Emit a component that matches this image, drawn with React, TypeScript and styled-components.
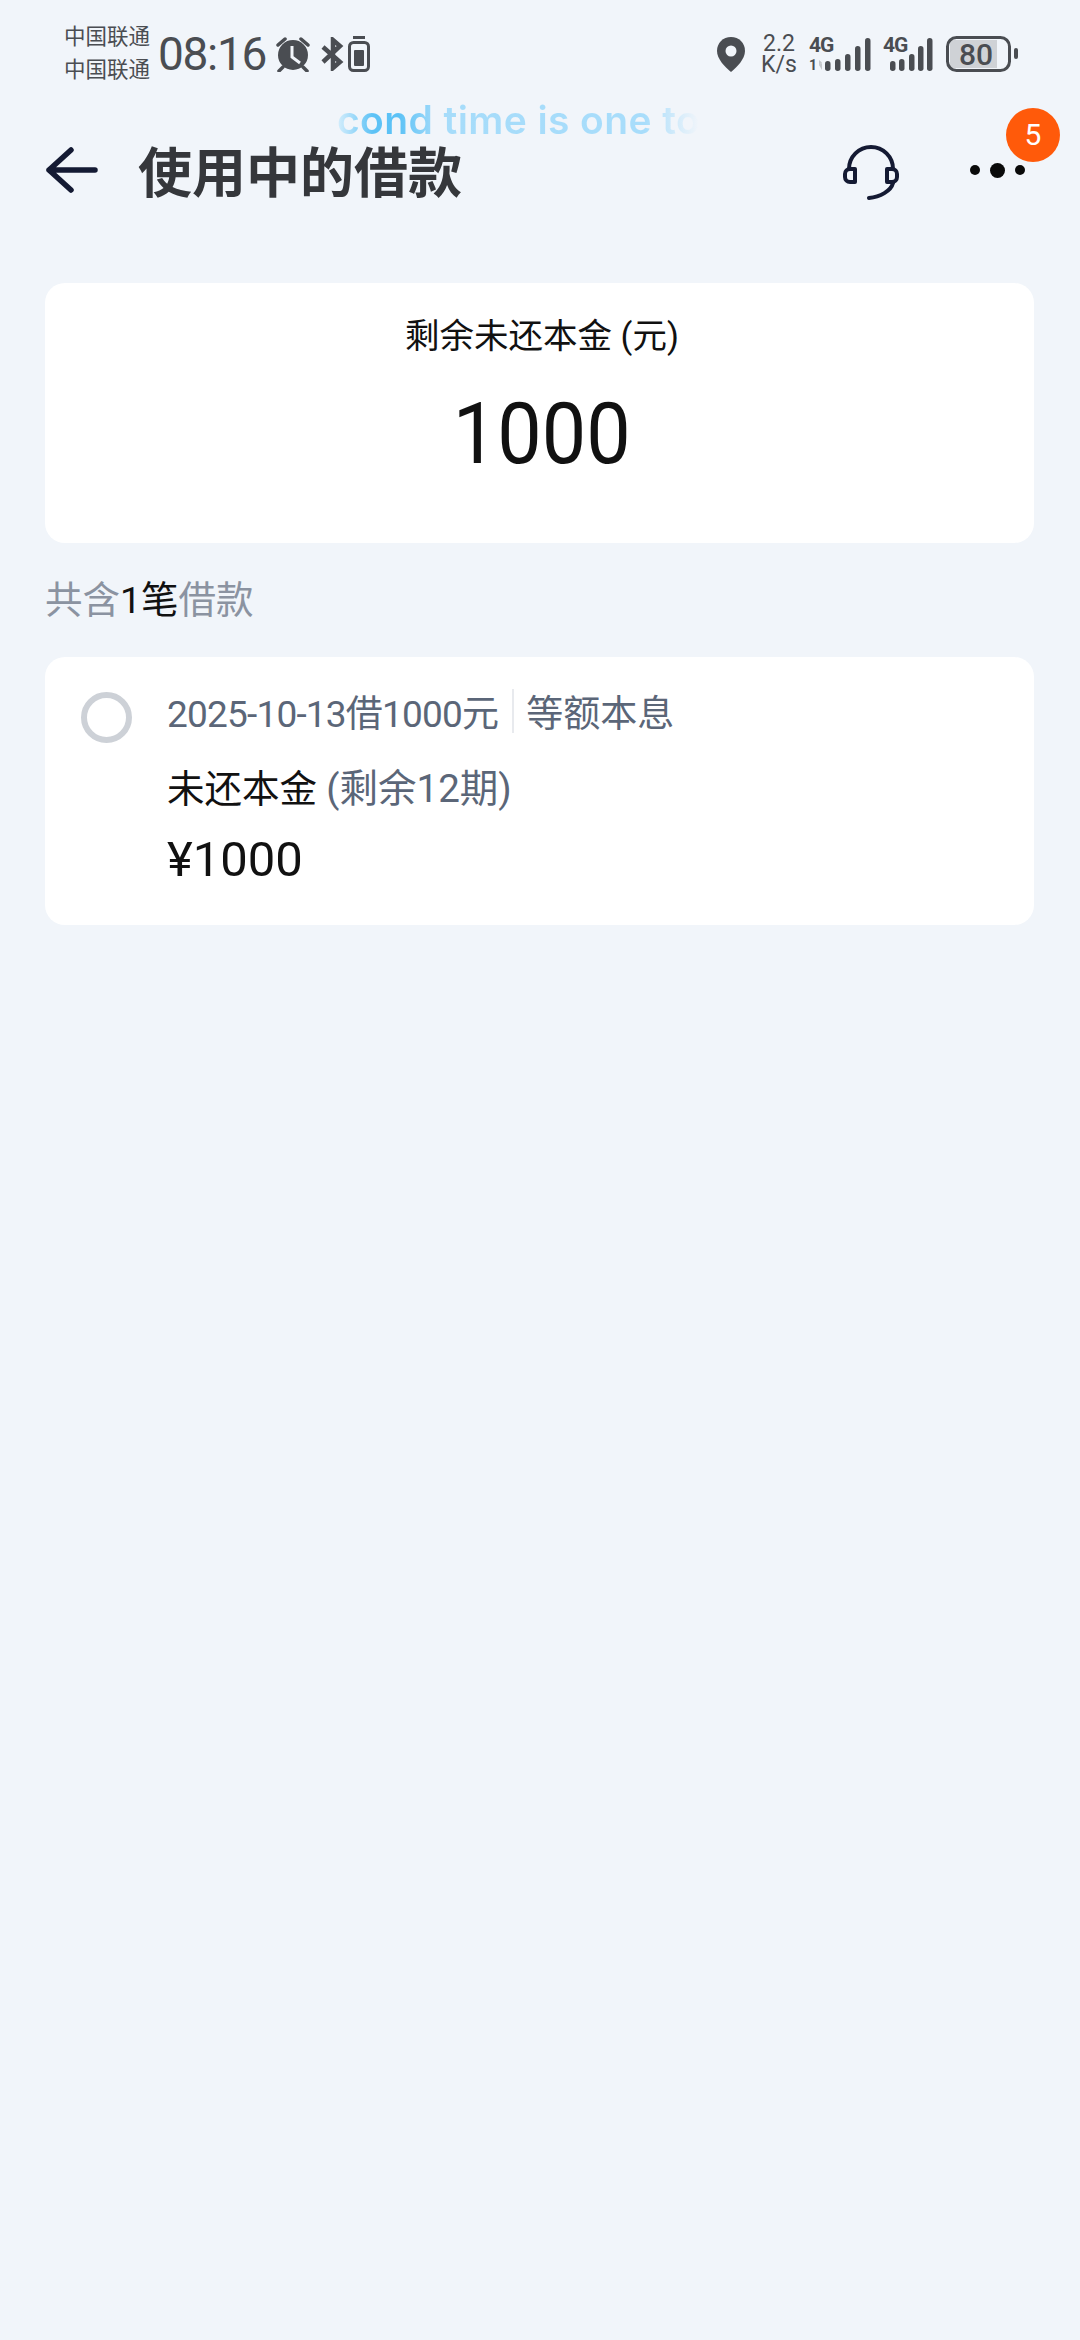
import styled, { createGlobalStyle } from "styled-components";

const GlobalStyle = createGlobalStyle`
    html, body {
        margin: 0;
        padding: 0;
        background: #f1f5fa;
    }
    * {
        box-sizing: border-box;
    }
`
const Page = styled.div`
    width: 1080px;
    height: 2340px;
    overflow: hidden;
    background: #f1f5fa;
    font-family: "Roboto", "Noto Sans CJK SC", sans-serif;
`
const StatusBar = styled.div`
    height: 100px;
    padding: 30px 62px 22px 64px;
    display: flex;
    align-items: center;
    justify-content: space-between;
    color: #4a4d52;
`
const StatusGroup = styled.div`
    display: flex;
    align-items: center;
`
const Carriers = styled.div`
    display: flex;
    flex-direction: column;
    gap: 9px;
    font-size: 21.5px;
    line-height: 24px;
    margin-top: -2px;
    width: 94px;
`
const Clock = styled.div`
    font-size: 46px;
    line-height: 50px;
    width: 117px;
    letter-spacing: -1.3px;
`
const Speed = styled.div`
    width: 48px;
    margin: 0 6px 0 10px;
    font-size: 23px;
    line-height: 21px;
    text-align: center;
`
const Header = styled.div`
    position: relative;
    height: 140px;
    padding: 0 0 0 46px;
    display: flex;
    align-items: center;
`
const Title = styled.h1`
    margin: 0 0 0 40px;
    font-size: 54px;
    line-height: 60px;
    font-weight: 700;
    color: #35373b;
    font-family: "Noto Sans CJK SC", sans-serif;
`
const HeadsetBox = styled.div`
    display: flex;
    margin-left: auto;
    margin-right: 70px;
    margin-top: 2px;
`
const Dots = styled.div`
    display: flex;
    align-items: center;
    gap: 10px;
    margin-right: 55px;
`
const Dot = styled.span<{ $size: number }>`
    width: ${p => p.$size}px;
    height: ${p => p.$size}px;
    border-radius: 50%;
    background: #0a0a0a;
`
const Badge = styled.div`
    position: absolute;
    top: 8px;
    right: 20px;
    width: 54px;
    height: 54px;
    border-radius: 50%;
    background: #ff5a0a;
    color: #fff;
    font-size: 30px;
    line-height: 54px;
    text-align: center;
`
const Marquee = styled.div`
    position: absolute;
    top: -5px;
    left: 337px;
    width: 362px;
    white-space: nowrap;
    overflow: hidden;
    font-family: "Inter", sans-serif;
    font-size: 39px;
    line-height: 50px;
    letter-spacing: 0.4px;
    font-weight: 600;
    color: transparent;
    background: linear-gradient(90deg, #d6eefc 0%, #5cc2f6 10%, #5cc2f6 17%, #a6dcfa 28%, #a8ddfb 85%, #f1f5fa 100%);
    -webkit-background-clip: text;
    background-clip: text;
`
const Content = styled.div`
    margin-top: 43px;
    padding: 0 46px 0 45px;
`
const SummaryCard = styled.div`
    height: 260px;
    background: #fff;
    border-radius: 20px;
    display: flex;
    flex-direction: column;
    align-items: center;
    padding: 29px 0 0 5px;
`
const SummaryLabel = styled.div`
    font-size: 34.5px;
    line-height: 48px;
    color: #111;
`
const SummaryValue = styled.div`
    margin-top: 24px;
    font-size: 86px;
    line-height: 100px;
    color: #111;
    transform: scaleX(0.92);
`
const SectionLabel = styled.div`
    height: 114px;
    padding-bottom: 8px;
    display: flex;
    align-items: center;
    font-size: 37.5px;
    color: #8b93a1;
`
const Strong = styled.span`
    color: #111;
`
const LoanCard = styled.div`
    height: 268px;
    background: #fff;
    border-radius: 20px;
    padding: 32px 36px 0 36px;
    display: flex;
`
const Radio = styled.div`
    flex: none;
    width: 51px;
    height: 51px;
    margin-top: 3px;
    border: 6px solid #cdd1d7;
    border-radius: 50%;
`
const LoanInfo = styled.div`
    margin-left: 35px;
    display: flex;
    flex-direction: column;
`
const MetaRow = styled.div`
    display: flex;
    align-items: center;
    height: 44px;
    font-size: 37px;
    color: #5b6678;
`
const MetaDate = styled.span`
    letter-spacing: -0.8px;
`
const MetaDivider = styled.span`
    width: 2px;
    height: 44px;
    margin: 0 12px 0 14px;
    background: #e8eaee;
`
const RemainRow = styled.div`
    margin-top: 34px;
    height: 44px;
    line-height: 44px;
    font-size: 37.5px;
    color: #111;
`
const RemainNote = styled.span`
    color: #5b6678;
    font-size: 38.5px;
`
const Amount = styled.div`
    margin-top: 25px;
    font-size: 49px;
    line-height: 48px;
    color: #111;
`

const AlarmIcon = () => (
    <svg width="38" height="36" viewBox="0 0 38 36">
        <circle cx="18" cy="19" r="15" fill="#4a4d52" />
        <path d="M17 10v11l8 6" fill="none" stroke="#f1f5fa" strokeWidth="3" />
        <path d="M3 9l7-6M33 9l-7-6M8 31l-4 4M28 31l4 4" fill="none" stroke="#4a4d52" strokeWidth="3.5" strokeLinecap="round" />
    </svg>
)

const BluetoothIcon = () => (
    <svg width="24" height="34" viewBox="0 0 24 34" style={{ marginLeft: 8 }}>
        <path d="M2 10l17 15-7 6V3l7 6L2 25" fill="none" stroke="#4a4d52" strokeWidth="4.5" />
    </svg>
)

const BatterySaverIcon = () => (
    <svg width="22" height="36" viewBox="0 0 22 36" style={{ marginLeft: 3 }}>
        <path d="M5 1.5h12" stroke="#4a4d52" strokeWidth="3" />
        <rect x="1.5" y="6.5" width="19" height="28" rx="4" fill="none" stroke="#4a4d52" strokeWidth="3" />
        <rect x="6" y="14" width="10" height="16" rx="1" fill="#4a4d52" />
    </svg>
)

const PinIcon = () => (
    <svg width="28" height="35" viewBox="0 0 28 35">
        <path d="M14 0C6 0 0 6 0 14c0 8 8 16 14 21 6-5 14-13 14-21C28 6 22 0 14 0z" fill="#4a4d52" />
        <circle cx="14" cy="14" r="5.5" fill="#f1f5fa" />
    </svg>
)

const barHeights = [10, 12, 17, 25, 33]

const SignalIcon = ({ wide }: { wide?: boolean }) => (
    <svg width={wide ? 64 : 50} height="44" viewBox={wide ? "0 -4 64 44" : "0 -4 50 44"} style={{ marginLeft: wide ? 0 : 10 }}>
        <text x="0" y="16" fontSize="21" fontWeight="700" fill="#4a4d52" fontFamily="Roboto, sans-serif" letterSpacing="-1">4G</text>
        {wide && <text x="0" y="34" fontSize="14" fontWeight="700" fill="#4a4d52" fontFamily="Roboto, sans-serif">1</text>}
        {wide && <path d="M10 24v5l3-2.5zM10 29l3 5v-7z" fill="#c4c7cb" />}
        {(wide ? [16, 26, 36, 46, 56] : [7, 16, 26, 35, 44]).map((x, i) => (
            <rect key={x} x={x} y={35 - barHeights[i]} width="5.5" height={barHeights[i]} rx="2.7" fill="#4a4d52" />
        ))}
    </svg>
)

const BatteryIcon = () => (
    <svg width="72" height="36" viewBox="0 0 72 36" style={{ marginLeft: 13 }}>
        <path d="M8 4h43v28H8a4 4 0 0 1-4-4V8a4 4 0 0 1 4-4z" fill="#cfd2d6" />
        <rect x="1.5" y="1.5" width="62" height="33" rx="9" fill="none" stroke="#4a4d52" strokeWidth="3" />
        <rect x="68" y="12" width="4" height="11" rx="2" fill="#4a4d52" />
        <text x="30" y="29" fontSize="30" fontWeight="500" textAnchor="middle" fill="#4a4d52" fontFamily="Roboto, sans-serif">80</text>
    </svg>
)

const BackIcon = () => (
    <svg width="52" height="46" viewBox="0 0 52 46">
        <path d="M3 23h46M25 3L3 23l22 20" fill="none" stroke="#141a33" strokeWidth="5.5" strokeLinecap="round" strokeLinejoin="round" />
    </svg>
)

const HeadsetIcon = () => (
    <svg width="58" height="57" viewBox="0 0 58 57">
        <path d="M7 26A22 22 0 0 1 51 26" fill="none" stroke="#141a33" strokeWidth="4" />
        <path d="M13 26H8a5 5 0 0 0-5 5v3a5 5 0 0 0 5 5h5zM45 26h5a5 5 0 0 1 5 5v3a5 5 0 0 1-5 5h-5z" fill="none" stroke="#141a33" strokeWidth="4" strokeLinejoin="round" />
        <path d="M51 40C49 48 38 54 27 55" fill="none" stroke="#141a33" strokeWidth="4" strokeLinecap="round" />
    </svg>
)

const App = () => {
    return (
        <Page>
            <GlobalStyle />
            <StatusBar>
                <StatusGroup>
                    <Carriers>
                        <span>中国联通</span>
                        <span>中国联通</span>
                    </Carriers>
                    <Clock>08:16</Clock>
                    <AlarmIcon />
                    <BluetoothIcon />
                    <BatterySaverIcon />
                </StatusGroup>
                <StatusGroup>
                    <PinIcon />
                    <Speed>2.2<br />K/s</Speed>
                    <SignalIcon wide />
                    <SignalIcon />
                    <BatteryIcon />
                </StatusGroup>
            </StatusBar>
            <Header>
                <Marquee>cond time is one to</Marquee>
                <BackIcon />
                <Title>使用中的借款</Title>
                <HeadsetBox><HeadsetIcon /></HeadsetBox>
                <Dots>
                    <Dot $size={10} />
                    <Dot $size={15} />
                    <Dot $size={10} />
                </Dots>
                <Badge>5</Badge>
            </Header>
            <Content>
                <SummaryCard>
                    <SummaryLabel>剩余未还本金 (元)</SummaryLabel>
                    <SummaryValue>1000</SummaryValue>
                </SummaryCard>
                <SectionLabel>共含<Strong>1笔</Strong>借款</SectionLabel>
                <LoanCard>
                    <Radio />
                    <LoanInfo>
                        <MetaRow>
                            <MetaDate>2025-10-13借1000元</MetaDate>
                            <MetaDivider />
                            等额本息
                        </MetaRow>
                        <RemainRow>未还本金 <RemainNote>(剩余12期)</RemainNote></RemainRow>
                        <Amount>¥1000</Amount>
                    </LoanInfo>
                </LoanCard>
            </Content>
        </Page>
    )
}

export default App;
